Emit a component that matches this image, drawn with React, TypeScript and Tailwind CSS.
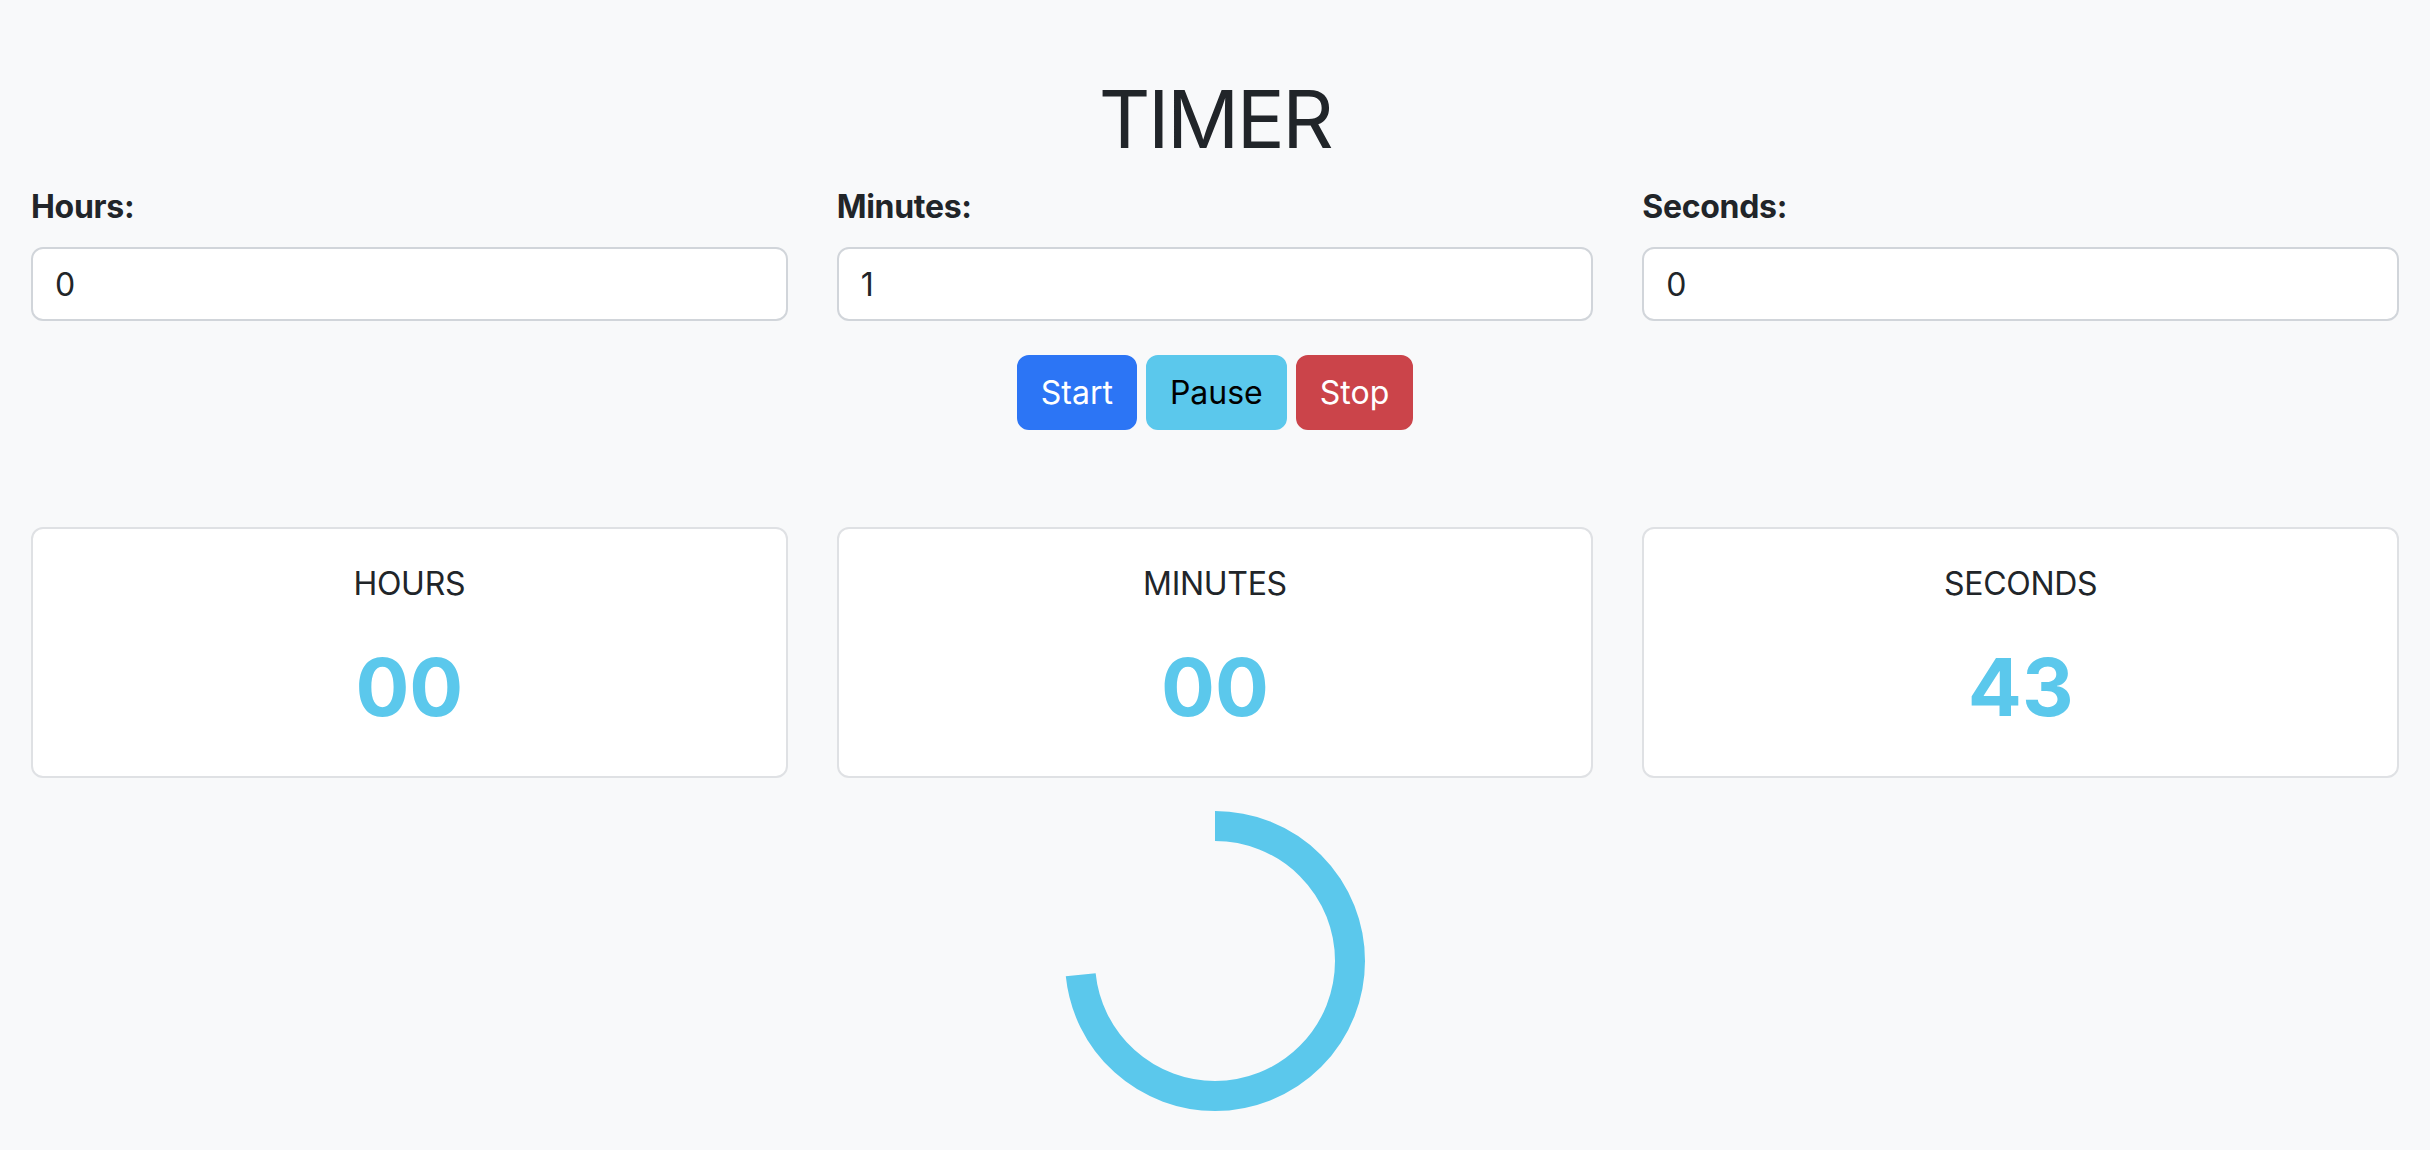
import { useState } from "react";

const ARC_R = 135;
const ARC_LEN = 2 * Math.PI * ARC_R;

function TimeField({
  label,
  value,
  onChange,
}: {
  label: string;
  value: string;
  onChange: (v: string) => void;
}) {
  return (
    <div className="flex flex-col">
      <label className="mb-4 text-[32px] font-bold leading-[48px] tracking-[-0.3px] text-[#212529]">
        {label}
      </label>
      <input
        type="number"
        value={value}
        onChange={(e) => onChange(e.target.value)}
        className="h-[74px] w-full rounded-xl border-2 border-[#d1d5da] bg-white px-[22px] text-[32px] leading-[48px] text-[#212529] outline-none [appearance:textfield] [&::-webkit-inner-spin-button]:appearance-none [&::-webkit-outer-spin-button]:appearance-none"
      />
    </div>
  );
}

function TimeCard({ label, value }: { label: string; value: string }) {
  return (
    <div className="flex h-[251px] flex-col items-center rounded-xl border-2 border-[#dfe1e4] bg-white pt-[31px]">
      <p className="text-[32px] leading-[48px] tracking-[-0.3px] text-[#212529]">{label}</p>
      <p className="mt-[31px] text-[80px] font-bold leading-[96px] text-[#5bc8ec]">
        {value}
      </p>
    </div>
  );
}

export default function App() {
  const [hours, setHours] = useState("0");
  const [minutes, setMinutes] = useState("1");
  const [seconds, setSeconds] = useState("0");

  // remaining time shown in the cards
  const left = { h: "00", m: "00", s: "43" };
  const progress = 264 / 360;

  return (
    <main className="min-h-screen bg-[#f8f9fa] px-[31px] pt-[71px] font-['Inter',sans-serif] text-[#212529]">
      <h1 className="mb-4 text-center text-[80px] font-normal leading-[96px] tracking-[-2.5px]">
        TIMER
      </h1>

      <div className="grid grid-cols-3 gap-x-[49px]">
        <TimeField label="Hours:" value={hours} onChange={setHours} />
        <TimeField label="Minutes:" value={minutes} onChange={setMinutes} />
        <TimeField label="Seconds:" value={seconds} onChange={setSeconds} />
      </div>

      <div className="mt-[34px] flex justify-center gap-[9px]">
        <button className="h-[75px] rounded-xl border-2 border-[#2c75f5] bg-[#2c75f5] px-[22px] text-[32px] leading-[48px] text-white">
          Start
        </button>
        <button className="h-[75px] rounded-xl border-2 border-[#5bc8ec] bg-[#5bc8ec] px-[22px] text-[32px] leading-[48px] text-black">
          Pause
        </button>
        <button className="h-[75px] rounded-xl border-2 border-[#cb444a] bg-[#cb444a] px-[22px] text-[32px] leading-[48px] text-white">
          Stop
        </button>
      </div>

      <div className="mt-[97px] grid grid-cols-3 gap-x-[49px]">
        <TimeCard label="HOURS" value={left.h} />
        <TimeCard label="MINUTES" value={left.m} />
        <TimeCard label="SECONDS" value={left.s} />
      </div>

      <div className="mt-[33px] flex justify-center pb-10">
        <svg width="300" height="300" viewBox="0 0 300 300" className="-rotate-90">
          <circle
            cx="150"
            cy="150"
            r={ARC_R}
            fill="none"
            stroke="#5bc8ec"
            strokeWidth="30"
            strokeDasharray={ARC_LEN}
            strokeDashoffset={ARC_LEN * (1 - progress)}
          />
        </svg>
      </div>
    </main>
  );
}
